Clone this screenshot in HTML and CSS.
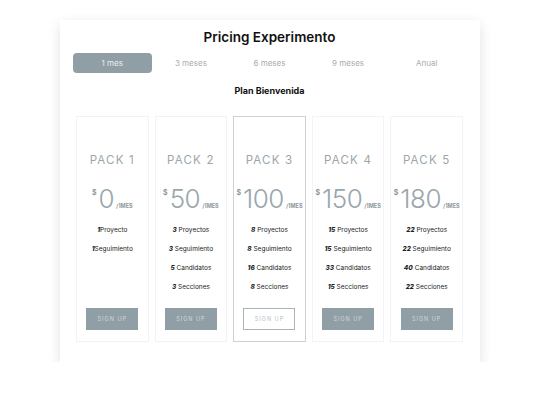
FILE: index.html
```html
<!DOCTYPE html>
<html lang="es">
<head>
    <meta charset="UTF-8">
    <meta name="viewport" content="width=device-width, initial-scale=1.0">
    <title>Pricing Experimento</title>
    <link rel="stylesheet" href="styles.css">
</head>
<body>
    <div class="panel">
        <h1>Pricing Experimento</h1>

        <div class="tabs">
            <div class="tab active">1 mes</div>
            <div class="tab">3 meses</div>
            <div class="tab">6 meses</div>
            <div class="tab">9 meses</div>
            <div class="tab">Anual</div>
        </div>

        <h2>Plan Bienvenida</h2>

        <div class="packs">
            <div class="pack">
                <h3>PACK 1</h3>
                <div class="price"><span class="cur">$</span><span class="amount">0</span><span class="per">/1MES</span></div>
                <ul>
                    <li><b>1</b>Proyecto</li>
                    <li><b>1</b>Seguimiento</li>
                </ul>
                <button>SIGN UP</button>
            </div>

            <div class="pack">
                <h3>PACK 2</h3>
                <div class="price"><span class="cur">$</span><span class="amount">50</span><span class="per">/1MES</span></div>
                <ul>
                    <li><b>3</b> Proyectos</li>
                    <li><b>3</b> Seguimiento</li>
                    <li><b>5</b> Candidatos</li>
                    <li><b>3</b> Secciones</li>
                </ul>
                <button>SIGN UP</button>
            </div>

            <div class="pack featured">
                <h3>PACK 3</h3>
                <div class="price"><span class="cur">$</span><span class="amount">100</span><span class="per">/1MES</span></div>
                <ul>
                    <li><b>8</b> Proyectos</li>
                    <li><b>8</b> Seguimiento</li>
                    <li><b>16</b> Candidatos</li>
                    <li><b>8</b> Secciones</li>
                </ul>
                <button>SIGN UP</button>
            </div>

            <div class="pack">
                <h3>PACK 4</h3>
                <div class="price"><span class="cur">$</span><span class="amount">150</span><span class="per">/1MES</span></div>
                <ul>
                    <li><b>15</b> Proyectos</li>
                    <li><b>15</b> Seguimiento</li>
                    <li><b>33</b> Candidatos</li>
                    <li><b>15</b> Secciones</li>
                </ul>
                <button>SIGN UP</button>
            </div>

            <div class="pack">
                <h3>PACK 5</h3>
                <div class="price"><span class="cur">$</span><span class="amount">180</span><span class="per">/1MES</span></div>
                <ul>
                    <li><b>22</b> Proyectos</li>
                    <li><b>22</b> Seguimiento</li>
                    <li><b>40</b> Candidatos</li>
                    <li><b>22</b> Secciones</li>
                </ul>
                <button>SIGN UP</button>
            </div>
        </div>
    </div>
</body>
</html>
```

FILE: styles.css
```css
body {
    margin: 0;
    background: #fff;
    font-family: Inter, "Noto Sans", sans-serif;
    color: #222;
}
.panel {
    width: 420px;
    height: 342px;
    box-sizing: border-box;
    margin: 20px auto 0;
    padding: 8px 14px 0 13px;
    background: #fff;
    box-shadow: 0 4px 12px rgba(0, 0, 0, 0.12);
}
h1 {
    margin: 0;
    font-size: 13.5px;
    line-height: 18px;
    font-weight: 600;
    text-align: center;
    color: #111;
}
.tabs {
    display: flex;
    margin-top: 7px;
}
.tab {
    flex: 1;
    height: 20px;
    line-height: 20px;
    text-align: center;
    font-size: 8px;
    color: #acacac;
    border-radius: 4px;
}
.tab.active {
    background: #8f9fa5;
    color: #e9edef;
}
h2 {
    margin: 12px 0 0;
    font-size: 9px;
    line-height: 12px;
    font-weight: 700;
    text-align: center;
    color: #111;
}
.packs {
    display: flex;
    gap: 6px;
    margin: 19px 3px 0;
}
.pack {
    flex: 1;
    height: 226px;
    box-sizing: border-box;
    display: flex;
    flex-direction: column;
    align-items: center;
    padding: 36px 0 11px;
    border: 1px solid #f2f3f4;
}
.pack.featured {
    border-color: #cfd2d4;
}
h3 {
    margin: 0;
    font-size: 11.5px;
    line-height: 14px;
    font-weight: 400;
    letter-spacing: 1.2px;
    color: #9aa6ac;
}
.price {
    display: flex;
    align-items: baseline;
    margin-top: 17px;
    height: 30px;
    line-height: 30px;
    color: #9aa6ac;
}
.cur {
    align-self: flex-start;
    font-size: 7px;
    line-height: 18px;
    font-weight: 700;
    color: #8d989d;
    margin-right: 2px;
}
.amount {
    font-size: 26px;
    font-weight: 300;
    letter-spacing: -0.5px;
}
.per {
    font-size: 5.5px;
    font-weight: 700;
    margin-left: 2px;
    color: #8d989d;
}
ul {
    list-style: none;
    margin: 7px 0 0;
    padding: 0;
}
li {
    font-size: 6.5px;
    line-height: 19px;
    text-align: center;
    color: #222;
}
li b {
    font-style: italic;
    font-weight: 800;
}
button {
    margin-top: auto;
    width: 52px;
    height: 22px;
    padding: 0;
    border: none;
    background: #8f9fa5;
    color: #d0d8db;
    font-family: Inter, "Noto Sans", sans-serif;
    font-size: 5.5px;
    letter-spacing: 1px;
}
.featured button {
    background: #fff;
    border: 1px solid #a9b4b9;
    color: #b9c1c5;
}
```
